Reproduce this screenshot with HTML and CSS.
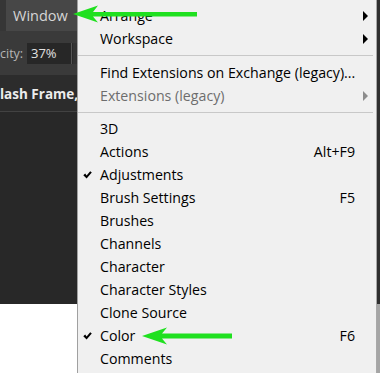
FILE: index.html
```html
<!DOCTYPE html>
<html>
<head>
<meta charset="utf-8">
<link rel="stylesheet" href="styles.css">
</head>
<body>
<div class="screen">
  <div class="app">
    <div class="menubar">
      <div class="bar-edge"></div>
      <div class="bar-title">Window</div>
    </div>
    <div class="options">
      <span class="opt-label">city:</span>
      <span class="opt-field">37%</span>
      <span class="opt-next"></span>
    </div>
    <div class="tabs"><span class="tab">lash Frame,</span></div>
    <div class="workarea"></div>
    <div class="below"></div>
  </div>

  <div class="menu">
    <div class="item"><span class="chk"></span><span class="lbl">Arrange</span><span class="key"></span><span class="sub"><svg width="5" height="10" viewBox="0 0 5 10"><path d="M0 0L5 5L0 10Z" fill="#000"/></svg></span></div>
    <div class="item"><span class="chk"></span><span class="lbl">Workspace</span><span class="key"></span><span class="sub"><svg width="5" height="10" viewBox="0 0 5 10"><path d="M0 0L5 5L0 10Z" fill="#000"/></svg></span></div>
    <div class="sep"></div>
    <div class="item"><span class="chk"></span><span class="lbl">Find Extensions on Exchange (legacy)...</span><span class="key"></span><span class="sub"></span></div>
    <div class="item disabled"><span class="chk"></span><span class="lbl">Extensions (legacy)</span><span class="key"></span><span class="sub"><svg width="5" height="10" viewBox="0 0 5 10"><path d="M0 0L5 5L0 10Z" fill="#8c8c8c"/></svg></span></div>
    <div class="sep sep-tight"></div>
    <div class="item"><span class="chk"></span><span class="lbl">3D</span><span class="key"></span><span class="sub"></span></div>
    <div class="item"><span class="chk"></span><span class="lbl">Actions</span><span class="key">Alt+F9</span><span class="sub"></span></div>
    <div class="item"><span class="chk"><svg width="9" height="8" viewBox="0 0 9 8"><path d="M0.3 4.2L2.2 2.6L3.6 4.4L7.2 0.2L8.8 1.6L3.6 7.6Z" fill="#000"/></svg></span><span class="lbl">Adjustments</span><span class="key"></span><span class="sub"></span></div>
    <div class="item"><span class="chk"></span><span class="lbl">Brush Settings</span><span class="key">F5</span><span class="sub"></span></div>
    <div class="item"><span class="chk"></span><span class="lbl">Brushes</span><span class="key"></span><span class="sub"></span></div>
    <div class="item"><span class="chk"></span><span class="lbl">Channels</span><span class="key"></span><span class="sub"></span></div>
    <div class="item"><span class="chk"></span><span class="lbl">Character</span><span class="key"></span><span class="sub"></span></div>
    <div class="item"><span class="chk"></span><span class="lbl">Character Styles</span><span class="key"></span><span class="sub"></span></div>
    <div class="item"><span class="chk"></span><span class="lbl">Clone Source</span><span class="key"></span><span class="sub"></span></div>
    <div class="item"><span class="chk"><svg width="9" height="8" viewBox="0 0 9 8"><path d="M0.3 4.2L2.2 2.6L3.6 4.4L7.2 0.2L8.8 1.6L3.6 7.6Z" fill="#000"/></svg></span><span class="lbl">Color</span><span class="key">F6</span><span class="sub"></span></div>
    <div class="item"><span class="chk"></span><span class="lbl">Comments</span><span class="key"></span><span class="sub"></span></div>
  </div>

  <div class="strip">
    <div class="strip-dark"></div>
    <div class="strip-light"></div>
  </div>

  <svg class="arrow arrow-top" width="124" height="18" viewBox="0 0 124 18">
    <path d="M0 9L25 0.5L20 7L124 7L124 11.5L20 11.5L25 17.5Z" fill="#1fe01f"/>
  </svg>
  <svg class="arrow arrow-color" width="90" height="18" viewBox="0 0 90 18">
    <path d="M0 9L25 0.5L20 6.5L90 6.5L90 11.5L20 11.5L25 17.5Z" fill="#1fe01f"/>
  </svg>
</div>
</body>
</html>
```

FILE: styles.css
```css
* { box-sizing: border-box; }

html, body {
  margin: 0;
  padding: 0;
  background: #ffffff;
}

.screen {
  position: relative;
  display: flex;
  width: 380px;
  height: 373px;
  overflow: hidden;
  font-family: "Open Sans", "Noto Sans", sans-serif;
}

/* ---------- left application area ---------- */
.app {
  width: 77px;
  flex: none;
  display: flex;
  flex-direction: column;
  overflow: hidden;
}

.menubar {
  height: 31px;
  display: flex;
  flex: none;
}

.bar-edge {
  width: 6px;
  background: #363636;
}

.bar-title {
  flex: 1;
  background: #474747;
  color: #d6d6d6;
  font-size: 14.5px;
  line-height: 31px;
  padding-left: 7px;
  white-space: nowrap;
}

.options {
  height: 45px;
  flex: none;
  background: #3a3a3a;
  display: flex;
  align-items: center;
  border-bottom: 1px solid #2c2c2c;
  white-space: nowrap;
}

.opt-label {
  color: #b6b6b6;
  font-size: 12.5px;
  margin-left: 0;
  width: 27px;
  flex: none;
}

.opt-field {
  width: 45px;
  height: 21px;
  flex: none;
  background: #272727;
  color: #e2e2e2;
  font-size: 13px;
  line-height: 21px;
  padding-left: 4px;
  border-right: 1px solid #555;
}

.opt-next {
  flex: 1;
  height: 21px;
  background: #333;
  border-left: 1px solid #2a2a2a;
}

.tabs {
  height: 36px;
  flex: none;
  background: #2c2c2c;
  border-bottom: 1px solid #424242;
  display: flex;
  align-items: center;
  white-space: nowrap;
}

.tab {
  color: #ececec;
  font-size: 13.5px;
  font-weight: 700;
  margin-left: 0;
}

.workarea {
  height: 192px;
  flex: none;
  background: #282828;
}

.below {
  flex: 1;
  background: #ffffff;
}

/* ---------- dropdown menu ---------- */
.menu {
  width: 300px;
  flex: none;
  background: #f0f0f0;
  border-left: 1px solid #a0a0a0;
  border-right: 1px solid #a8a8a8;
  padding-top: 4px;
  font-size: 14.2px;
  color: #000;
}

.item {
  height: 23px;
  display: flex;
  align-items: center;
  white-space: nowrap;
}

.chk {
  width: 22px;
  flex: none;
  display: flex;
  justify-content: flex-start;
  padding-left: 5px;
}

.chk svg { display: block; }

.lbl {
  flex: 1;
}

.key {
  flex: none;
  text-align: right;
}

.sub {
  width: 21px;
  flex: none;
  display: flex;
  padding-left: 8px;
}

.sub svg { display: block; }

.disabled { color: #6d6d6d; }

.sep {
  height: 11px;
  display: flex;
  align-items: center;
  padding-right: 3px;
}

.sep-tight {
  height: 10px;
}

.sep::after {
  content: "";
  display: block;
  height: 1px;
  width: 100%;
  background: #c8c8c8;
}

/* ---------- right edge ---------- */
.strip {
  width: 3px;
  flex: none;
  display: flex;
  flex-direction: column;
}

.strip-dark {
  height: 304px;
  background: #2f2f2f;
}

.strip-light {
  flex: 1;
  background: #a5a5a5;
}

/* ---------- annotation arrows (overlay) ---------- */
.arrow {
  position: absolute;
  display: block;
}

.arrow-top {
  left: 73px;
  top: 5px;
}

.arrow-color {
  left: 142px;
  top: 327px;
}
```
